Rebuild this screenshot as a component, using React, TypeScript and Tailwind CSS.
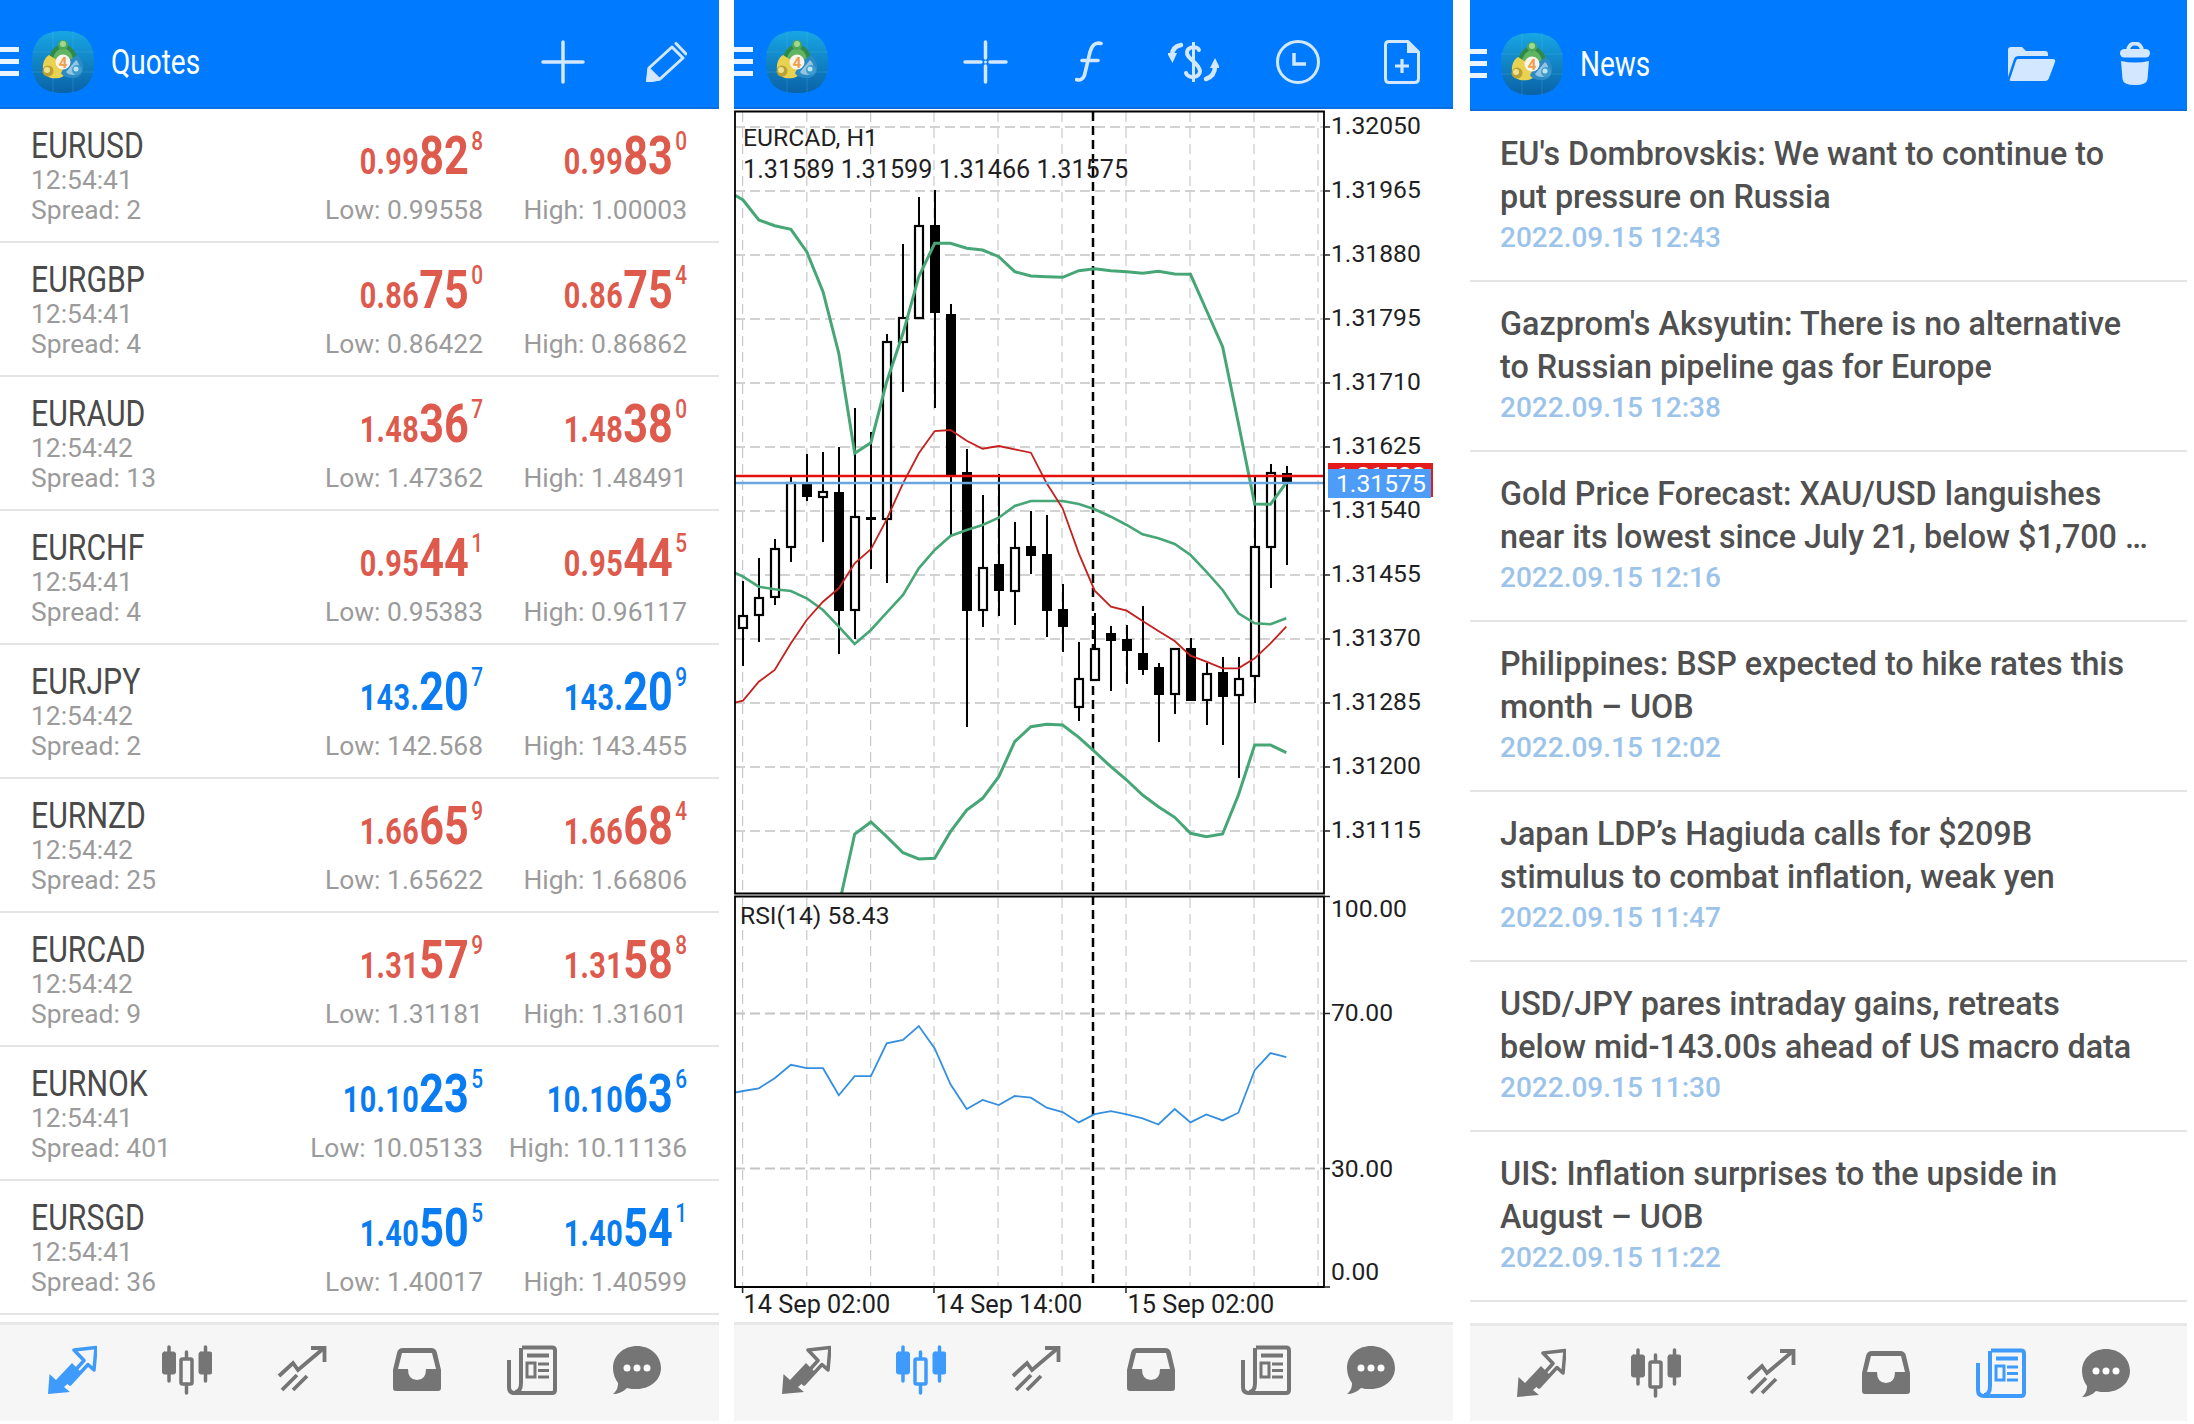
import React from "react";

const Hamburger = ({ w = "w-[19px]" }: { w?: string }) => (
  <div className={`flex flex-col gap-[7px] shrink-0 ${w}`}>
    <div className="h-[5px] bg-[#eaf4ff]" />
    <div className="h-[5px] bg-[#eaf4ff]" />
    <div className="h-[5px] bg-[#eaf4ff]" />
  </div>
);

const Logo = ({ cls }: { cls: string }) => (
  <svg viewBox="0 0 62 62" className={`w-[62px] h-[62px] shrink-0 ${cls}`}>
    <defs>
      <linearGradient id="lg" x1="0" y1="0" x2="0" y2="1">
        <stop offset="0" stopColor="#18a6e4" />
        <stop offset="1" stopColor="#0a62a6" />
      </linearGradient>
    </defs>
    <path d="M31 0 C52 0 62 10 62 31 C62 52 52 62 31 62 C10 62 0 52 0 31 C0 10 10 0 31 0Z" fill="url(#lg)" />
    <path d="M0 21H62M0 41H62M21 0V62M41 0V62" stroke="#6fcbf0" strokeWidth="0.6" opacity="0.35" />
    <path d="M31 13 C40 14 45 22 46 31 L31 36 L16 31 C17 22 22 14 31 13Z" fill="#2f8a4a" />
    <path d="M31 17 C37 18 40 23 41 28 L31 31 L21 28 C22 23 25 18 31 17Z" fill="#5fb562" />
    <circle cx="31" cy="14" r="5" fill="#4ea85a" />
    <circle cx="31" cy="13" r="3" fill="#a3d98f" />
    <path d="M17 24 C9 29 8 44 19 47 C27 48 33 46 34 42 L28 31Z" fill="#e8d250" />
    <circle cx="16" cy="40" r="5.500" fill="#b8a238" />
    <circle cx="15" cy="39" r="3" fill="#efe08a" />
    <path d="M45 24 C54 31 53 46 42 47 C35 47 30 45 29 42 L35 31Z" fill="#2c8bc4" />
    <path d="M44 29 C49 33 49 43 42 44 C38 44 35 43 34 41Z" fill="#d7ecf6" opacity="0.6" />
    <circle cx="45" cy="39" r="5" fill="#3d9ccd" />
    <circle cx="44" cy="38" r="2.500" fill="#bfe4f3" />
    <circle cx="31" cy="31" r="7.500" fill="#f9f4ec" />
    <text x="31" y="36.500" textAnchor="middle" fontSize="15" fontWeight="700" fill="#ef9f4a">4</text>
  </svg>
);

const TOP = "#d3e7ff";

const PlusIcon = () => (
  <svg viewBox="0 0 44 44" className="w-[44px] h-[44px]" fill="none" stroke={TOP} strokeWidth="3.5" strokeLinecap="round">
    <path d="M2 22H42M22 2V42" />
  </svg>
);
const PencilIcon = () => (
  <svg viewBox="0 0 41 40" className="w-[41px] h-[40px]" fill="none" stroke={TOP} strokeWidth="3" strokeLinejoin="round" strokeLinecap="round">
    <path d="M3 26 L26 5 L37 16 L14 37 L1.5 39 Z" />
    <path d="M30 1.5 L40 12" />
    <path d="M3 27 L13 37 L2 39Z" fill={TOP} />
  </svg>
);
const CrossIcon = () => (
  <svg viewBox="0 0 45 44" className="w-[45px] h-[44px]" fill="none" stroke={TOP} strokeWidth="3.5" strokeLinecap="round">
    <path d="M2 22H18M27 22H43M22.5 2V18M22.5 26V42" />
    <circle cx="22.5" cy="22" r="1.5" fill={TOP} stroke="none" />
  </svg>
);
const FuncIcon = () => (
  <svg viewBox="0 0 28 41" className="w-[28px] h-[41px]" fill="none" stroke={TOP} strokeWidth="3.6" strokeLinecap="round">
    <path d="M26 2.5 C20 1 17 4 15 11 L10 32 C9 38 5 40 1.5 38.5" />
    <path d="M7 19.5 H23" />
  </svg>
);
const DollarIcon = () => (
  <svg viewBox="0 0 51 40" className="w-[51px] h-[40px]" fill="none" stroke={TOP} strokeWidth="4" strokeLinecap="round">
    <path d="M31 8 C30 4 20 4 19 10 C18 17 31 20 32 29 C32 36 20 37 18 31" />
    <path d="M25.5 1V39" strokeWidth="3" />
    <path d="M13 3 C7 4 4 8 4 14" strokeWidth="4.500" />
    <path d="M-1 11 L9 11 L4.5 21Z" fill={TOP} stroke="none" />
    <path d="M38 37 C44 35 47 30 47 24" strokeWidth="4.500" />
    <path d="M42 26 L52 26 L47 16Z" fill={TOP} stroke="none" />
  </svg>
);
const ClockIcon = () => (
  <svg viewBox="0 0 44 44" className="w-[44px] h-[44px]" fill="none" stroke={TOP} strokeWidth="3">
    <circle cx="22" cy="22" r="20.5" />
    <path d="M18 13V24H30" strokeWidth="3.5" />
  </svg>
);
const DocIcon = () => (
  <svg viewBox="0 0 36 44" className="w-[36px] h-[44px]" fill="none" stroke={TOP} strokeWidth="3">
    <path d="M5 1.5 H24 L34.5 12 V38.5 Q34.5 42.5 30.5 42.5 H5 Q1.5 42.5 1.5 38.5 V5 Q1.5 1.5 5 1.5Z" strokeLinejoin="round" />
    <path d="M23 2 L34 13 H23Z" fill={TOP} stroke="none" />
    <path d="M18 19V33M11 26H25" strokeWidth="3.2" />
  </svg>
);
const FolderIcon = () => (
  <svg viewBox="0 0 48 34" className="w-[48px] h-[34px]" fill={TOP}>
    <path d="M0 3 Q0 0 3 0 H14 L18 4 H37 Q40 4 40 7 V9 H11 Q7 9 6 12 L0 30 Z" />
    <path d="M10 12 H45 Q48 12 47 15 L41 31 Q40 34 37 34 H3 Q1 34 2 32 L8 14 Q8.500 12 10 12Z" />
  </svg>
);
const TrashIcon = () => (
  <svg viewBox="0 0 30 43" className="w-[30px] h-[43px]" fill={TOP}>
    <path d="M8 9 C8 -1 22 -1 22 9" fill="none" stroke={TOP} strokeWidth="4" />
    <rect x="0" y="7" width="30" height="8.500" rx="4.200" />
    <path d="M1 19 Q15 22 29 19 L27.500 37 Q27 43 15 43 Q3 43 2.500 37 Z" />
  </svg>
);

const GRAY = "#757575";
const ACT = "#3f9bfb";
const BG = "#f6f6f6";

const TabArrows = ({ c }: { c: string }) => (
  <svg viewBox="0 0 50 50" className="w-[50px] h-[50px]" fill="none">
    <path d="M1 49 L2.500 29 L9 35 L25 18 L34 27 L17 42 L23 47 Z" fill={c} />
    <path d="M27 5 L49 2.500 L47 25 L41 19.500 L23 39 L19 35.500 L37 15.500 Z" stroke={c} strokeWidth="3.500" strokeLinejoin="round" />
  </svg>
);
const TabCandles = ({ c }: { c: string }) => (
  <svg viewBox="0 0 50 50" className="w-[50px] h-[50px]" fill="none" stroke={c} strokeWidth="3.500" strokeLinecap="round">
    <path d="M7 2V36M43.500 2V36M24.500 7V48" />
    <rect x="0.500" y="7" width="13" height="22" rx="2" fill={c} strokeWidth="1" />
    <rect x="37" y="7" width="13" height="22" rx="2" fill={c} strokeWidth="1" />
    <rect x="19" y="14" width="11" height="25" rx="1.500" fill={BG} />
  </svg>
);
const TabTrend = ({ c }: { c: string }) => (
  <svg viewBox="0 0 50 50" className="w-[50px] h-[50px]" fill="none" stroke={c} strokeWidth="3.800">
    <path d="M2 31 L16 18 L21 25 L47 3" />
    <path d="M34 3 H47.500 V17" />
    <path d="M5 45 L20 30 M16 45 L30 31" />
  </svg>
);
const TabInbox = ({ c }: { c: string }) => (
  <svg viewBox="0 0 50 50" className="w-[50px] h-[50px]">
    <path d="M11 3 H39 Q44 3 45 8 L49 25 V43 Q49 46 46 46 H4 Q1 46 1 43 V25 L5 8 Q6 3 11 3Z" fill={c} />
    <path d="M10 8 H40 L44 24 H34 Q34 35 25 35 Q16 35 16 24 H6Z" fill={BG} />
  </svg>
);
const TabNews = ({ c }: { c: string }) => (
  <svg viewBox="0 0 50 50" className="w-[50px] h-[50px]" fill="none" stroke={c} strokeWidth="4">
    <path d="M15 2.500 H45 Q48 2.500 48 5.500 V45 Q48 48 45 48 H8 Q2 48 2 42 V15" strokeLinejoin="round" />
    <path d="M14 3 V38 Q14 47 8 47" />
    <path d="M20 10.500 H42" />
    <rect x="20" y="18" width="8" height="14" strokeWidth="3" />
    <path d="M31 19 H42 M31 25.500 H42 M31 32 H42" strokeWidth="3.200" />
  </svg>
);
const TabChat = ({ c }: { c: string }) => (
  <svg viewBox="0 0 50 50" className="w-[50px] h-[50px]">
    <path d="M25 1 C38 1 49 10 49 23 C49 35 38 44 25 44 C21 44 18 44 15 43 C11 47 6 49 1 49 C5 46 6 42 6 38 C3 34 1 29 1 23 C1 10 12 1 25 1Z" fill={c} />
    <circle cx="15" cy="23" r="3.500" fill="#fff" />
    <circle cx="25" cy="23" r="3.500" fill="#fff" />
    <circle cx="35" cy="23" r="3.500" fill="#fff" />
  </svg>
);

const TabBar = ({ active, cls }: { active: number; cls: string }) => {
  const icons = [TabArrows, TabCandles, TabTrend, TabInbox, TabNews, TabChat];
  return (
    <div className={`flex items-start gap-[65px] bg-[#f6f6f6] border-t-[3px] border-[#e8e8e8] ${cls}`}>
      {icons.map((I, i) => (
        <div key={i} className={i === 5 ? "w-[50px] -ml-[10px]" : "w-[50px]"}>
          <I c={i === active ? ACT : GRAY} />
        </div>
      ))}
    </div>
  );
};

type Q = {
  s: string; t: string; sp: string; c: "r" | "b";
  bid: [string, string, string]; ask: [string, string, string]; lo: string; hi: string;
};
const quotes: Q[] = [
  { s: "EURUSD", t: "12:54:41", sp: "2", c: "r", bid: ["0.99", "82", "8"], ask: ["0.99", "83", "0"], lo: "0.99558", hi: "1.00003" },
  { s: "EURGBP", t: "12:54:41", sp: "4", c: "r", bid: ["0.86", "75", "0"], ask: ["0.86", "75", "4"], lo: "0.86422", hi: "0.86862" },
  { s: "EURAUD", t: "12:54:42", sp: "13", c: "r", bid: ["1.48", "36", "7"], ask: ["1.48", "38", "0"], lo: "1.47362", hi: "1.48491" },
  { s: "EURCHF", t: "12:54:41", sp: "4", c: "r", bid: ["0.95", "44", "1"], ask: ["0.95", "44", "5"], lo: "0.95383", hi: "0.96117" },
  { s: "EURJPY", t: "12:54:42", sp: "2", c: "b", bid: ["143.", "20", "7"], ask: ["143.", "20", "9"], lo: "142.568", hi: "143.455" },
  { s: "EURNZD", t: "12:54:42", sp: "25", c: "r", bid: ["1.66", "65", "9"], ask: ["1.66", "68", "4"], lo: "1.65622", hi: "1.66806" },
  { s: "EURCAD", t: "12:54:42", sp: "9", c: "r", bid: ["1.31", "57", "9"], ask: ["1.31", "58", "8"], lo: "1.31181", hi: "1.31601" },
  { s: "EURNOK", t: "12:54:41", sp: "401", c: "b", bid: ["10.10", "23", "5"], ask: ["10.10", "63", "6"], lo: "10.05133", hi: "10.11136" },
  { s: "EURSGD", t: "12:54:41", sp: "36", c: "b", bid: ["1.40", "50", "5"], ask: ["1.40", "54", "1"], lo: "1.40017", hi: "1.40599" },
];

const Price = ({ p, c }: { p: [string, string, string]; c: string }) => (
  <div className={`flex items-baseline justify-end h-[60px] leading-[60px] font-bold origin-right scale-x-[0.8] ${c}`}>
    <span className="text-[36px] tracking-[0.5px]">{p[0]}</span>
    <span className="text-[54px]">{p[1]}</span>
    <span className="text-[26px] font-medium ml-[3px] leading-none align-top relative -top-[24px]">{p[2]}</span>
  </div>
);

const QuoteRow = ({ q }: { q: Q }) => {
  const c = q.c === "r" ? "text-[#dd5a4c]" : "text-[#0a7cf2]";
  return (
    <div className="h-[134px] flex border-b-2 border-[#e4e4e4] pl-[31px] pr-[32px] pt-[17px]">
      <div className="flex-1">
        <div className="text-[36px] leading-[40px] text-[#4a4a4a] origin-left scale-x-[0.84]">{q.s}</div>
        <div className="text-[26.4px] leading-[29px] text-[#9b9b9b]">{q.t}</div>
        <div className="text-[26.4px] leading-[30px] text-[#9b9b9b]">Spread: {q.sp}</div>
      </div>
      <div className="w-[204px]">
        <Price p={q.bid} c={c} />
        <div className="mt-[10px] text-right text-[26.4px] leading-[29px] text-[#9b9b9b]">Low: {q.lo}</div>
      </div>
      <div className="w-[204px]">
        <Price p={q.ask} c={c} />
        <div className="mt-[10px] text-right text-[26.4px] leading-[29px] text-[#9b9b9b]">High: {q.hi}</div>
      </div>
    </div>
  );
};

const news: [string, string, string][] = [
  ["EU's Dombrovskis: We want to continue to", "put pressure on Russia", "2022.09.15 12:43"],
  ["Gazprom's Aksyutin: There is no alternative", "to Russian pipeline gas for Europe", "2022.09.15 12:38"],
  ["Gold Price Forecast: XAU/USD languishes", "near its lowest since July 21, below $1,700 …", "2022.09.15 12:16"],
  ["Philippines: BSP expected to hike rates this", "month – UOB", "2022.09.15 12:02"],
  ["Japan LDP’s Hagiuda calls for $209B", "stimulus to combat inflation, weak yen", "2022.09.15 11:47"],
  ["USD/JPY pares intraday gains, retreats", "below mid-143.00s ahead of US macro data", "2022.09.15 11:30"],
  ["UIS: Inflation surprises to the upside in", "August – UOB", "2022.09.15 11:22"],
];

const NewsItem = ({ n }: { n: [string, string, string] }) => (
  <div className="h-[170px] border-b-2 border-[#e4e4e4] pl-[30px] pt-[21px]">
    <div className="text-[32.3px] leading-[43px] font-medium text-[#505050] whitespace-nowrap">{n[0]}</div>
    <div className="text-[32.3px] leading-[43px] font-medium text-[#505050] whitespace-nowrap">{n[1]}</div>
    <div className="text-[28px] leading-[36px] mt-[1px] font-medium text-[#9cc4ea]">{n[2]}</div>
  </div>
);

const zx = (x: number) => 730 + x / 2.15;
const y2 = (y: number) => y / 3;
const y3 = (y: number) => 480 + y / 3;
const y4 = (y: number) => 900 + y / 2.985;
const pts = (a: number[][], f: (n: number) => number) => a.map(([x, y]) => `${zx(x).toFixed(1)},${f(y).toFixed(1)}`).join(" ");

// white?, wickTop, wickBottom, bodyTop, bodyBottom
const candles: [boolean, number, number, number, number][] = [
  [true, 581, 666, 616, 628], [true, 558, 642, 598, 615], [true, 539, 605, 549, 597], [true, 477, 562, 483, 547],
  [false, 454, 501, 482, 497], [true, 452, 542, 492, 497], [false, 447, 654, 492, 611], [true, 408, 639, 517, 610],
  [false, 432, 569, 517, 520], [true, 334, 583, 342, 519], [true, 244, 392, 318, 342], [true, 197, 318, 226, 318],
  [false, 190, 408, 225, 313], [false, 304, 536, 314, 475], [false, 449, 727, 472, 611], [true, 495, 627, 568, 610],
  [false, 474, 616, 564, 591], [true, 522, 625, 548, 591], [false, 511, 574, 546, 556], [false, 515, 637, 554, 611],
  [false, 584, 652, 609, 627], [true, 642, 721, 679, 707], [true, 613, 680, 649, 680], [false, 626, 691, 633, 641],
  [false, 625, 684, 639, 651], [false, 606, 675, 653, 670], [false, 663, 742, 667, 695], [true, 648, 714, 649, 694],
  [false, 638, 701, 648, 701], [true, 663, 725, 674, 700], [false, 657, 745, 672, 697], [true, 657, 778, 679, 695],
  [true, 477, 703, 547, 676], [true, 464, 588, 473, 547], [false, 466, 565, 473, 484],
];

const upper = `${pts([[10,585],[28,600],[62,660],[96,677],[131,688],[165,755],[200,875],[234,1060],[268,1360],[303,1328],[337,1145],[372,1000],[406,830],[440,730],[474,730],[509,745],[543,750],[578,770],[612,815],[647,828],[681,830],[715,832],[750,812],[784,806],[819,812],[853,815],[887,820],[921,814],[956,822],[990,823],[1024,930],[1059,1040],[1093,1270]], y2)} ${pts([[1128,72],[1162,73],[1196,8]], y3)}`;
const middle = pts([[10,278],[28,290],[62,320],[96,328],[131,333],[165,355],[200,390],[234,440],[268,492],[303,450],[337,398],[372,345],[406,265],[440,210],[474,168],[509,150],[543,135],[578,113],[612,78],[647,63],[681,63],[715,63],[750,72],[784,88],[819,110],[853,135],[887,163],[921,175],[956,192],[990,225],[1024,275],[1059,330],[1093,400],[1128,430],[1162,433],[1196,415]], y3);
const lower = pts([[240,1240],[268,1062],[303,1026],[337,1070],[372,1118],[406,1137],[440,1135],[474,1055],[509,990],[543,955],[578,890],[612,785],[647,740],[681,733],[715,735],[750,772],[784,815],[819,860],[853,900],[887,945],[921,980],[956,1012],[990,1060],[1024,1070],[1059,1062],[1093,945],[1128,795],[1162,795],[1196,818]], y3);
const red = `${pts([[10,668],[28,662],[62,605],[96,570],[131,490],[165,420],[200,365],[234,325],[268,250],[303,208],[337,118],[372,10]], y3)} ${pts([[406,1360],[440,1293],[474,1290],[509,1322],[543,1346],[578,1338],[612,1348],[647,1358],[681,1450]], y2)} ${pts([[715,85],[750,220],[784,332],[819,380],[853,392],[887,423],[921,453],[956,483],[990,527],[1024,545],[1059,565],[1093,565],[1128,535],[1162,490],[1196,440]], y3)}`;
const rsi = pts([[10,575],[28,570],[62,562],[96,532],[131,492],[165,502],[200,502],[234,583],[268,526],[303,526],[337,428],[372,418],[406,376],[440,443],[474,550],[509,624],[543,597],[578,612],[612,585],[647,590],[681,620],[715,633],[750,664],[784,639],[819,630],[853,640],[887,652],[921,670],[956,624],[990,664],[1024,640],[1059,658],[1093,635],[1128,508],[1162,457],[1196,469]], y4);

const priceLabels = ["1.32050", "1.31965", "1.31880", "1.31795", "1.31710", "1.31625", "1.31540", "1.31455", "1.31370", "1.31285", "1.31200", "1.31115"];
const vGrid = [742.6, 806.8, 870.6, 934, 998, 1062, 1126, 1190, 1254, 1318];
const L = 735, R = 1324;

const Chart = () => (
  <svg viewBox="734 109 719 1213" className="w-[719px] h-[1213px] block">
    {vGrid.map((x) => (
      <g key={x}>
        <line x1={x} x2={x} y1={112} y2={892} stroke="#c8c8c8" strokeWidth="1.200" strokeDasharray="10 6" />
        <line x1={x} x2={x} y1={898} y2={1286} stroke="#c8c8c8" strokeWidth="1.200" strokeDasharray="10 6" />
      </g>
    ))}
    {priceLabels.map((_, i) => (
      <line key={i} x1={L} x2={R} y1={127 + i * 64} y2={127 + i * 64} stroke="#c4c4c4" strokeWidth="1.500" strokeDasharray="10 5" />
    ))}
    <line x1={L} x2={R} y1={1013.5} y2={1013.5} stroke="#c4c4c4" strokeWidth="2" strokeDasharray="10 5" />
    <line x1={L} x2={R} y1={1168.5} y2={1168.5} stroke="#c4c4c4" strokeWidth="2" strokeDasharray="10 5" />

    <line x1={1093} x2={1093} y1={112} y2={1286} stroke="#000" strokeWidth="2.500" strokeDasharray="9 5" />

    {candles.map(([w, wt, wb, bt, bb], i) => {
      const x = 743 + 16 * i;
      return (
        <g key={i}>
          <line x1={x} x2={x} y1={wt} y2={wb} stroke="#000" strokeWidth="2" />
          {w ? (
            <rect x={x - 4} y={bt} width={8} height={bb - bt} fill="#fff" stroke="#000" strokeWidth="2.200" />
          ) : (
            <rect x={x - 5} y={bt} width={10} height={bb - bt} fill="#000" />
          )}
        </g>
      );
    })}

    <polyline points={upper} fill="none" stroke="#46a676" strokeWidth="3" />
    <polyline points={middle} fill="none" stroke="#46a676" strokeWidth="2.600" />
    <polyline points={lower} fill="none" stroke="#46a676" strokeWidth="3" />
    <polyline points={red} fill="none" stroke="#c4201e" strokeWidth="1.800" />

    <line x1={L} x2={R} y1={476} y2={476} stroke="#e3100f" strokeWidth="2.600" />
    <line x1={L} x2={R} y1={483} y2={483} stroke="#6aa6de" strokeWidth="2.400" />

    <polyline points={rsi} fill="none" stroke="#358fe0" strokeWidth="1.800" />

    <path d={`M${L} 111.500 H${R} V893.500 H${L} Z`} fill="none" stroke="#000" strokeWidth="1.800" />
    <path d={`M${L} 896.500 H${R} V1287 H${L} Z`} fill="none" stroke="#000" strokeWidth="1.800" />
    {priceLabels.map((_, i) => (
      <line key={i} x1={R} x2={R + 6} y1={127 + i * 64} y2={127 + i * 64} stroke="#222" strokeWidth="1.500" />
    ))}
    {[896.5, 1013.5, 1168.5, 1287].map((y) => (
      <line key={y} x1={R} x2={R + 6} y1={y} y2={y} stroke="#222" strokeWidth="1.500" />
    ))}
    {[742.6, 934, 1126].map((x) => (
      <line key={x} x1={x} x2={x} y1={1287} y2={1293} stroke="#222" strokeWidth="1.500" />
    ))}

    <g fontSize="24.700" fill="#1f1f1f">
      {priceLabels.map((p, i) => (
        <text key={p} x={1331} y={134.300 + i * 64}>{p}</text>
      ))}
      <text x={1331} y={916.500}>100.00</text>
      <text x={1331} y={1021}>70.00</text>
      <text x={1331} y={1176.500}>30.00</text>
      <text x={1331} y={1279.500}>0.00</text>
      <text x={743} y={145.500}>EURCAD, H1</text>
      <text x={743} y={177.500} fontSize="25.200">1.31589 1.31599 1.31466 1.31575</text>
      <text x={740} y={924}>RSI(14) 58.43</text>
      <text x={743.500} y={1313} fontSize="25.300">14 Sep 02:00</text>
      <text x={935.500} y={1313} fontSize="25.300">14 Sep 14:00</text>
      <text x={1127.500} y={1313} fontSize="25.300">15 Sep 02:00</text>
    </g>

    <rect x={1328} y={463} width={105} height={34} fill="#e51a1a" />
    <text x={1336} y={484} fontSize="24.700" fill="#ffffff">1.31583</text>
    <rect x={1328} y={469} width={103} height={29} fill="#4d9cf8" />
    <text x={1336} y={491.500} fontSize="24.700" fill="#ffffff">1.31575</text>
  </svg>
);

export default function App() {
  return (
    <div className="w-[2194px] h-[1424px] bg-white flex overflow-hidden [font-family:Roboto,sans-serif]">
      {/* Quotes */}
      <div className="w-[719px] flex flex-col">
        <div className="h-[109px] bg-[#007bff] border-b-2 border-[#0a6fdc] flex items-center pt-[16px]">
          <Hamburger />
          <Logo cls="ml-[13px]" />
          <span className="ml-[17px] mt-[4px] text-[35px] text-white origin-left scale-x-[0.8]">Quotes</span>
          <div className="ml-auto flex items-center gap-[61px] pr-[32px]">
            <PlusIcon />
            <PencilIcon />
          </div>
        </div>
        {quotes.map((q) => (
          <QuoteRow key={q.s} q={q} />
        ))}
        <TabBar active={0} cls="mt-[7px] h-[99px] pl-[47px] pt-[20px]" />
      </div>

      {/* Chart */}
      <div className="w-[719px] ml-[15px] flex flex-col">
        <div className="h-[109px] bg-[#007bff] border-b-2 border-[#0a6fdc] flex items-center pt-[16px]">
          <Hamburger />
          <Logo cls="ml-[13px]" />
          <div className="ml-[135px]"><CrossIcon /></div>
          <div className="ml-[67px]"><FuncIcon /></div>
          <div className="ml-[65px]"><DollarIcon /></div>
          <div className="ml-[57px]"><ClockIcon /></div>
          <div className="ml-[64px]"><DocIcon /></div>
        </div>
        <Chart />
        <TabBar active={1} cls="h-[99px] pl-[47px] pt-[20px]" />
      </div>

      {/* News */}
      <div className="w-[717px] ml-[17px] flex flex-col">
        <div className="h-[111px] bg-[#007bff] border-b-2 border-[#0a6fdc] flex items-center pt-[18px]">
          <Hamburger w="w-[17px]" />
          <Logo cls="ml-[14px]" />
          <span className="ml-[17px] mt-[4px] text-[35px] text-white origin-left scale-x-[0.8]">News</span>
          <div className="ml-auto flex items-center gap-[64px] pr-[37px]">
            <FolderIcon />
            <TrashIcon />
          </div>
        </div>
        <div className="pt-[1px]">
          {news.map((n) => (
            <NewsItem key={n[2]} n={n} />
          ))}
        </div>
        <TabBar active={4} cls="mt-[21px] h-[98px] pl-[46px] pt-[22px]" />
      </div>
    </div>
  );
}
